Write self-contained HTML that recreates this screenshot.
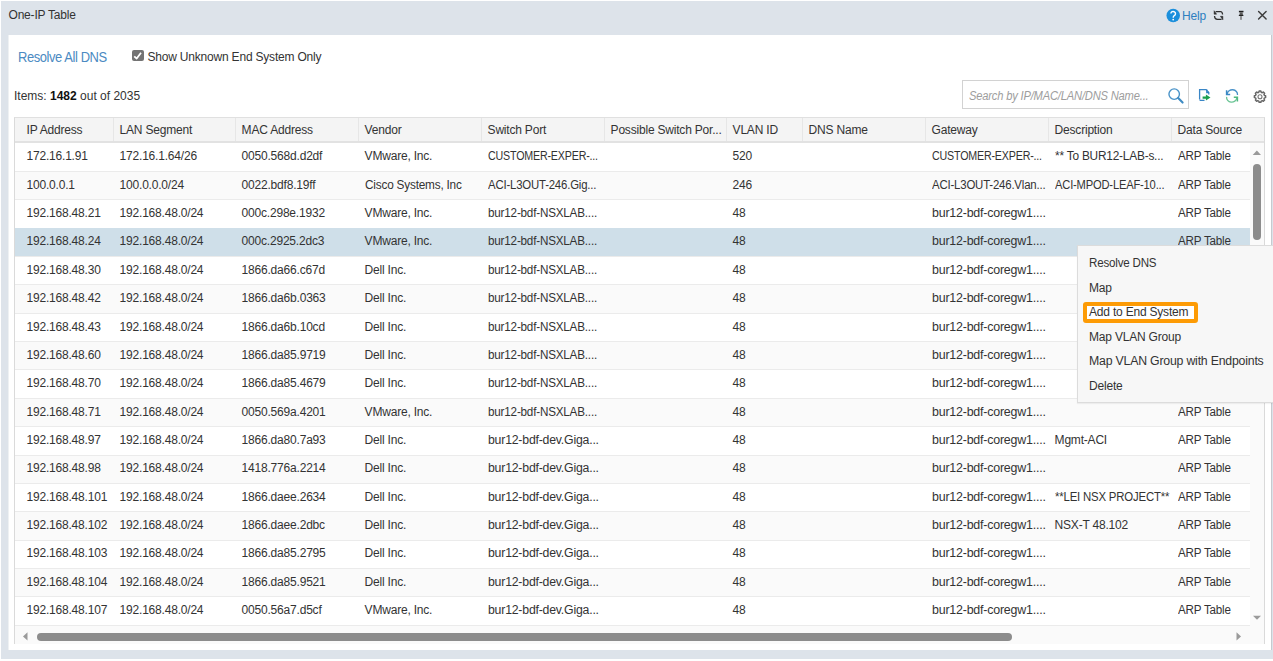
<!DOCTYPE html>
<html><head><meta charset="utf-8"><title>One-IP Table</title>
<style>
*{box-sizing:border-box;margin:0;padding:0}
html,body{width:1273px;height:661px;overflow:hidden;background:#fff}
body{position:relative;font-family:"Liberation Sans",sans-serif;font-size:12px;color:#333;letter-spacing:-0.2px}
.a{position:absolute}
.t{position:absolute;white-space:nowrap;line-height:14px}
svg{position:absolute;overflow:visible}
</style></head><body>

<div class="a" style="left:1px;top:1px;width:1272px;height:658px;background:#dde3ea"></div>
<div class="t" style="left:8.5px;top:8px;color:#333">One-IP Table</div>
<div class="a" style="left:8px;top:35px;width:1264px;height:615px;background:#fff;border-right:1px solid #c6cacf;border-left:1px solid #eef1f3"></div>
<div class="t" style="left:18px;top:50px;font-size:14px;letter-spacing:-0.45px;color:#4b8ac2;transform:scaleX(0.925);transform-origin:0 0">Resolve All DNS</div>
<div class="a" style="left:132.4px;top:50px;width:11.4px;height:11.2px;background:#737373;border-radius:2px"></div>
<svg style="left:132.4px;top:50px" width="11" height="11" viewBox="0 0 11 11"><path d="M2.2 6.3 L4.7 8.5 L9.0 2.7" stroke="#fff" stroke-width="1.75" fill="none" stroke-linejoin="round"/></svg>
<div class="t" style="left:147.5px;top:50px">Show Unknown End System Only</div>
<div class="t" style="left:14px;top:89px;letter-spacing:0">Items: <b style="color:#111">1482</b> out of 2035</div>
<div class="a" style="left:962px;top:80px;width:227px;height:29px;border:1px solid #d2d2d2;background:#fff"></div>
<div class="t" style="left:968.5px;top:89px;font-style:italic;color:#9d9d9d;transform:scaleX(0.93);transform-origin:0 0">Search by IP/MAC/LAN/DNS Name...</div>
<svg style="left:1160px;top:82px" width="30" height="26"><circle cx="14.2" cy="12.1" r="5.25" stroke="#4a93c8" stroke-width="1.4" fill="none"/><path d="M18.2 16.1 L22.6 20.6" stroke="#3f8bc3" stroke-width="2.1" stroke-linecap="round"/></svg>
<svg style="left:1195px;top:85px" width="20" height="20"><path d="M4.6 14.5 L4.6 4.6 L11 4.6 L13.8 7.4 L13.8 9.5 M4.6 15.3 L9.5 15.3" stroke="#3a86c6" stroke-width="1.3" fill="none"/><path d="M11.8 4.6 L11.8 7.5 L14 7.5" stroke="#2f7fc1" stroke-width="1.3" fill="none"/><path d="M7.6 11.4 L10.9 11.4 L10.9 9.4 L15.5 12.5 L10.9 15.6 L10.9 13.7 L7.6 13.7 Z" fill="#1a9f4f"/></svg>
<svg style="left:1224px;top:88px" width="16" height="16"><path d="M3.2 6 A5 4.6 0 0 1 13.5 7" stroke="#4a92c9" stroke-width="1.3" fill="none"/><path d="M2.6 2.2 L2.6 6.6 L6.2 6.6" stroke="#3a88c4" stroke-width="1.5" fill="none"/><path d="M2.6 8.8 A5 4.6 0 0 0 12.8 10" stroke="#6cc596" stroke-width="1.3" fill="none"/><path d="M13.4 13.6 L13.4 9.2 L9.8 9.2" stroke="#4fb87f" stroke-width="1.5" fill="none"/></svg>
<svg style="left:1248px;top:85px" width="24" height="22"><path d="M10.81 7.26 L11.11 6.07 L12.89 6.07 L13.19 7.26 L14.30 7.72 L15.35 7.09 L16.61 8.35 L15.98 9.40 L16.44 10.51 L17.63 10.81 L17.63 12.59 L16.44 12.89 L15.98 14.00 L16.61 15.05 L15.35 16.31 L14.30 15.68 L13.19 16.14 L12.89 17.33 L11.11 17.33 L10.81 16.14 L9.70 15.68 L8.65 16.31 L7.39 15.05 L8.02 14.00 L7.56 12.89 L6.37 12.59 L6.37 10.81 L7.56 10.51 L8.02 9.40 L7.39 8.35 L8.65 7.09 L9.70 7.72 Z" stroke="#666" stroke-width="1.45" fill="none" stroke-linejoin="round"/><circle cx="12" cy="11.7" r="2.0" stroke="#777" stroke-width="1.1" fill="none"/></svg>
<div class="a" style="left:14px;top:117px;width:1251px;height:527px;border:1px solid #dadada;border-top-color:#e0e0e0;border-bottom:0;background:#fafafa"></div>
<div class="a" style="left:15px;top:118px;width:1249px;height:23px;background:#f4f4f4"></div>
<div class="a" style="left:15px;top:141px;width:1249px;height:2px;background:#e2e2e2"></div>
<div class="t" style="left:26.5px;top:123px">IP Address</div>
<div class="a" style="left:113px;top:118px;width:1px;height:23px;background:#e6e6e6"></div>
<div class="t" style="left:119.6px;top:123px">LAN Segment</div>
<div class="a" style="left:235px;top:118px;width:1px;height:23px;background:#e6e6e6"></div>
<div class="t" style="left:241.6px;top:123px">MAC Address</div>
<div class="a" style="left:358px;top:118px;width:1px;height:23px;background:#e6e6e6"></div>
<div class="t" style="left:364.6px;top:123px">Vendor</div>
<div class="a" style="left:481px;top:118px;width:1px;height:23px;background:#e6e6e6"></div>
<div class="t" style="left:487.6px;top:123px">Switch Port</div>
<div class="a" style="left:604px;top:118px;width:1px;height:23px;background:#e6e6e6"></div>
<div class="t" style="left:610.6px;top:123px">Possible Switch Por...</div>
<div class="a" style="left:726px;top:118px;width:1px;height:23px;background:#e6e6e6"></div>
<div class="t" style="left:732.6px;top:123px">VLAN ID</div>
<div class="a" style="left:802px;top:118px;width:1px;height:23px;background:#e6e6e6"></div>
<div class="t" style="left:808.6px;top:123px">DNS Name</div>
<div class="a" style="left:925px;top:118px;width:1px;height:23px;background:#e6e6e6"></div>
<div class="t" style="left:931.6px;top:123px">Gateway</div>
<div class="a" style="left:1048px;top:118px;width:1px;height:23px;background:#e6e6e6"></div>
<div class="t" style="left:1054.6px;top:123px">Description</div>
<div class="a" style="left:1171px;top:118px;width:1px;height:23px;background:#e6e6e6"></div>
<div class="t" style="left:1177.6px;top:123px">Data Source</div>
<div class="a" style="left:15px;top:143px;width:1235px;height:482px;background:#fff"></div>
<div class="a" style="left:15px;top:143px;width:1235px;height:28px;background:#fff"></div>
<div class="a" style="left:15px;top:171px;width:1235px;height:1px;background:#ebebeb"></div>
<div class="t" style="left:26.5px;top:149px">172.16.1.91</div>
<div class="t" style="left:119.6px;top:149px">172.16.1.64/26</div>
<div class="t" style="left:241.6px;top:149px">0050.568d.d2df</div>
<div class="t" style="left:364.6px;top:149px">VMware, Inc.</div>
<div class="t" style="left:487.6px;top:149px;transform:scaleX(0.8897);transform-origin:0 0">CUSTOMER-EXPER-...</div>
<div class="t" style="left:732.6px;top:149px">520</div>
<div class="t" style="left:931.6px;top:149px;transform:scaleX(0.8897);transform-origin:0 0">CUSTOMER-EXPER-...</div>
<div class="t" style="left:1054.6px;top:149px;transform:scaleX(0.9870);transform-origin:0 0">** To BUR12-LAB-s...</div>
<div class="t" style="left:1177.6px;top:149px;transform:scaleX(0.9675);transform-origin:0 0">ARP Table</div>
<div class="a" style="left:15px;top:172px;width:1235px;height:27px;background:#fafafa"></div>
<div class="a" style="left:15px;top:199px;width:1235px;height:1px;background:#ebebeb"></div>
<div class="t" style="left:26.5px;top:178px">100.0.0.1</div>
<div class="t" style="left:119.6px;top:178px">100.0.0.0/24</div>
<div class="t" style="left:241.6px;top:178px">0022.bdf8.19ff</div>
<div class="t" style="left:364.6px;top:178px;transform:scaleX(0.9823);transform-origin:0 0">Cisco Systems, Inc</div>
<div class="t" style="left:487.6px;top:178px;transform:scaleX(0.9487);transform-origin:0 0">ACI-L3OUT-246.Gig...</div>
<div class="t" style="left:732.6px;top:178px">246</div>
<div class="t" style="left:931.6px;top:178px;transform:scaleX(0.9514);transform-origin:0 0">ACI-L3OUT-246.Vlan...</div>
<div class="t" style="left:1054.6px;top:178px;transform:scaleX(0.9306);transform-origin:0 0">ACI-MPOD-LEAF-10...</div>
<div class="t" style="left:1177.6px;top:178px;transform:scaleX(0.9675);transform-origin:0 0">ARP Table</div>
<div class="a" style="left:15px;top:200px;width:1235px;height:28px;background:#fff"></div>
<div class="a" style="left:15px;top:228px;width:1235px;height:1px;background:#ebebeb"></div>
<div class="t" style="left:26.5px;top:206px">192.168.48.21</div>
<div class="t" style="left:119.6px;top:206px">192.168.48.0/24</div>
<div class="t" style="left:241.6px;top:206px">000c.298e.1932</div>
<div class="t" style="left:364.6px;top:206px">VMware, Inc.</div>
<div class="t" style="left:487.6px;top:206px;transform:scaleX(0.9727);transform-origin:0 0">bur12-bdf-NSXLAB....</div>
<div class="t" style="left:732.6px;top:206px">48</div>
<div class="t" style="left:931.6px;top:206px;transform:scaleX(1.0350);transform-origin:0 0">bur12-bdf-coregw1....</div>
<div class="t" style="left:1177.6px;top:206px;transform:scaleX(0.9675);transform-origin:0 0">ARP Table</div>
<div class="a" style="left:15px;top:228px;width:1235px;height:28px;background:#cfdfe9"></div>
<div class="a" style="left:15px;top:256px;width:1235px;height:1px;background:#ebebeb"></div>
<div class="t" style="left:26.5px;top:234px">192.168.48.24</div>
<div class="t" style="left:119.6px;top:234px">192.168.48.0/24</div>
<div class="t" style="left:241.6px;top:234px">000c.2925.2dc3</div>
<div class="t" style="left:364.6px;top:234px">VMware, Inc.</div>
<div class="t" style="left:487.6px;top:234px;transform:scaleX(0.9727);transform-origin:0 0">bur12-bdf-NSXLAB....</div>
<div class="t" style="left:732.6px;top:234px">48</div>
<div class="t" style="left:931.6px;top:234px;transform:scaleX(1.0350);transform-origin:0 0">bur12-bdf-coregw1....</div>
<div class="t" style="left:1177.6px;top:234px;transform:scaleX(0.9675);transform-origin:0 0">ARP Table</div>
<div class="a" style="left:15px;top:257px;width:1235px;height:27px;background:#fff"></div>
<div class="a" style="left:15px;top:284px;width:1235px;height:1px;background:#ebebeb"></div>
<div class="t" style="left:26.5px;top:263px">192.168.48.30</div>
<div class="t" style="left:119.6px;top:263px">192.168.48.0/24</div>
<div class="t" style="left:241.6px;top:263px">1866.da66.c67d</div>
<div class="t" style="left:364.6px;top:263px">Dell Inc.</div>
<div class="t" style="left:487.6px;top:263px;transform:scaleX(0.9727);transform-origin:0 0">bur12-bdf-NSXLAB....</div>
<div class="t" style="left:732.6px;top:263px">48</div>
<div class="t" style="left:931.6px;top:263px;transform:scaleX(1.0350);transform-origin:0 0">bur12-bdf-coregw1....</div>
<div class="t" style="left:1177.6px;top:263px;transform:scaleX(0.9675);transform-origin:0 0">ARP Table</div>
<div class="a" style="left:15px;top:285px;width:1235px;height:28px;background:#fafafa"></div>
<div class="a" style="left:15px;top:313px;width:1235px;height:1px;background:#ebebeb"></div>
<div class="t" style="left:26.5px;top:291px">192.168.48.42</div>
<div class="t" style="left:119.6px;top:291px">192.168.48.0/24</div>
<div class="t" style="left:241.6px;top:291px">1866.da6b.0363</div>
<div class="t" style="left:364.6px;top:291px">Dell Inc.</div>
<div class="t" style="left:487.6px;top:291px;transform:scaleX(0.9727);transform-origin:0 0">bur12-bdf-NSXLAB....</div>
<div class="t" style="left:732.6px;top:291px">48</div>
<div class="t" style="left:931.6px;top:291px;transform:scaleX(1.0350);transform-origin:0 0">bur12-bdf-coregw1....</div>
<div class="t" style="left:1177.6px;top:291px;transform:scaleX(0.9675);transform-origin:0 0">ARP Table</div>
<div class="a" style="left:15px;top:314px;width:1235px;height:27px;background:#fff"></div>
<div class="a" style="left:15px;top:341px;width:1235px;height:1px;background:#ebebeb"></div>
<div class="t" style="left:26.5px;top:320px">192.168.48.43</div>
<div class="t" style="left:119.6px;top:320px">192.168.48.0/24</div>
<div class="t" style="left:241.6px;top:320px">1866.da6b.10cd</div>
<div class="t" style="left:364.6px;top:320px">Dell Inc.</div>
<div class="t" style="left:487.6px;top:320px;transform:scaleX(0.9727);transform-origin:0 0">bur12-bdf-NSXLAB....</div>
<div class="t" style="left:732.6px;top:320px">48</div>
<div class="t" style="left:931.6px;top:320px;transform:scaleX(1.0350);transform-origin:0 0">bur12-bdf-coregw1....</div>
<div class="t" style="left:1177.6px;top:320px;transform:scaleX(0.9675);transform-origin:0 0">ARP Table</div>
<div class="a" style="left:15px;top:342px;width:1235px;height:27px;background:#fafafa"></div>
<div class="a" style="left:15px;top:369px;width:1235px;height:1px;background:#ebebeb"></div>
<div class="t" style="left:26.5px;top:348px">192.168.48.60</div>
<div class="t" style="left:119.6px;top:348px">192.168.48.0/24</div>
<div class="t" style="left:241.6px;top:348px">1866.da85.9719</div>
<div class="t" style="left:364.6px;top:348px">Dell Inc.</div>
<div class="t" style="left:487.6px;top:348px;transform:scaleX(0.9727);transform-origin:0 0">bur12-bdf-NSXLAB....</div>
<div class="t" style="left:732.6px;top:348px">48</div>
<div class="t" style="left:931.6px;top:348px;transform:scaleX(1.0350);transform-origin:0 0">bur12-bdf-coregw1....</div>
<div class="t" style="left:1177.6px;top:348px;transform:scaleX(0.9675);transform-origin:0 0">ARP Table</div>
<div class="a" style="left:15px;top:370px;width:1235px;height:28px;background:#fff"></div>
<div class="a" style="left:15px;top:398px;width:1235px;height:1px;background:#ebebeb"></div>
<div class="t" style="left:26.5px;top:376px">192.168.48.70</div>
<div class="t" style="left:119.6px;top:376px">192.168.48.0/24</div>
<div class="t" style="left:241.6px;top:376px">1866.da85.4679</div>
<div class="t" style="left:364.6px;top:376px">Dell Inc.</div>
<div class="t" style="left:487.6px;top:376px;transform:scaleX(0.9727);transform-origin:0 0">bur12-bdf-NSXLAB....</div>
<div class="t" style="left:732.6px;top:376px">48</div>
<div class="t" style="left:931.6px;top:376px;transform:scaleX(1.0350);transform-origin:0 0">bur12-bdf-coregw1....</div>
<div class="t" style="left:1177.6px;top:376px;transform:scaleX(0.9675);transform-origin:0 0">ARP Table</div>
<div class="a" style="left:15px;top:399px;width:1235px;height:27px;background:#fafafa"></div>
<div class="a" style="left:15px;top:426px;width:1235px;height:1px;background:#ebebeb"></div>
<div class="t" style="left:26.5px;top:405px">192.168.48.71</div>
<div class="t" style="left:119.6px;top:405px">192.168.48.0/24</div>
<div class="t" style="left:241.6px;top:405px">0050.569a.4201</div>
<div class="t" style="left:364.6px;top:405px">VMware, Inc.</div>
<div class="t" style="left:487.6px;top:405px;transform:scaleX(0.9727);transform-origin:0 0">bur12-bdf-NSXLAB....</div>
<div class="t" style="left:732.6px;top:405px">48</div>
<div class="t" style="left:931.6px;top:405px;transform:scaleX(1.0350);transform-origin:0 0">bur12-bdf-coregw1....</div>
<div class="t" style="left:1177.6px;top:405px;transform:scaleX(0.9675);transform-origin:0 0">ARP Table</div>
<div class="a" style="left:15px;top:427px;width:1235px;height:28px;background:#fff"></div>
<div class="a" style="left:15px;top:455px;width:1235px;height:1px;background:#ebebeb"></div>
<div class="t" style="left:26.5px;top:433px">192.168.48.97</div>
<div class="t" style="left:119.6px;top:433px">192.168.48.0/24</div>
<div class="t" style="left:241.6px;top:433px">1866.da80.7a93</div>
<div class="t" style="left:364.6px;top:433px">Dell Inc.</div>
<div class="t" style="left:487.6px;top:433px;transform:scaleX(1.0230);transform-origin:0 0">bur12-bdf-dev.Giga...</div>
<div class="t" style="left:732.6px;top:433px">48</div>
<div class="t" style="left:931.6px;top:433px;transform:scaleX(1.0350);transform-origin:0 0">bur12-bdf-coregw1....</div>
<div class="t" style="left:1054.6px;top:433px">Mgmt-ACI</div>
<div class="t" style="left:1177.6px;top:433px;transform:scaleX(0.9675);transform-origin:0 0">ARP Table</div>
<div class="a" style="left:15px;top:456px;width:1235px;height:27px;background:#fafafa"></div>
<div class="a" style="left:15px;top:483px;width:1235px;height:1px;background:#ebebeb"></div>
<div class="t" style="left:26.5px;top:461px">192.168.48.98</div>
<div class="t" style="left:119.6px;top:461px">192.168.48.0/24</div>
<div class="t" style="left:241.6px;top:461px">1418.776a.2214</div>
<div class="t" style="left:364.6px;top:461px">Dell Inc.</div>
<div class="t" style="left:487.6px;top:461px;transform:scaleX(1.0230);transform-origin:0 0">bur12-bdf-dev.Giga...</div>
<div class="t" style="left:732.6px;top:461px">48</div>
<div class="t" style="left:931.6px;top:461px;transform:scaleX(1.0350);transform-origin:0 0">bur12-bdf-coregw1....</div>
<div class="t" style="left:1177.6px;top:461px;transform:scaleX(0.9675);transform-origin:0 0">ARP Table</div>
<div class="a" style="left:15px;top:484px;width:1235px;height:27px;background:#fff"></div>
<div class="a" style="left:15px;top:511px;width:1235px;height:1px;background:#ebebeb"></div>
<div class="t" style="left:26.5px;top:490px">192.168.48.101</div>
<div class="t" style="left:119.6px;top:490px">192.168.48.0/24</div>
<div class="t" style="left:241.6px;top:490px">1866.daee.2634</div>
<div class="t" style="left:364.6px;top:490px">Dell Inc.</div>
<div class="t" style="left:487.6px;top:490px;transform:scaleX(1.0230);transform-origin:0 0">bur12-bdf-dev.Giga...</div>
<div class="t" style="left:732.6px;top:490px">48</div>
<div class="t" style="left:931.6px;top:490px;transform:scaleX(1.0350);transform-origin:0 0">bur12-bdf-coregw1....</div>
<div class="t" style="left:1054.6px;top:490px;transform:scaleX(0.9497);transform-origin:0 0">**LEI NSX PROJECT**</div>
<div class="t" style="left:1177.6px;top:490px;transform:scaleX(0.9675);transform-origin:0 0">ARP Table</div>
<div class="a" style="left:15px;top:512px;width:1235px;height:28px;background:#fafafa"></div>
<div class="a" style="left:15px;top:540px;width:1235px;height:1px;background:#ebebeb"></div>
<div class="t" style="left:26.5px;top:518px">192.168.48.102</div>
<div class="t" style="left:119.6px;top:518px">192.168.48.0/24</div>
<div class="t" style="left:241.6px;top:518px">1866.daee.2dbc</div>
<div class="t" style="left:364.6px;top:518px">Dell Inc.</div>
<div class="t" style="left:487.6px;top:518px;transform:scaleX(1.0230);transform-origin:0 0">bur12-bdf-dev.Giga...</div>
<div class="t" style="left:732.6px;top:518px">48</div>
<div class="t" style="left:931.6px;top:518px;transform:scaleX(1.0350);transform-origin:0 0">bur12-bdf-coregw1....</div>
<div class="t" style="left:1054.6px;top:518px">NSX-T 48.102</div>
<div class="t" style="left:1177.6px;top:518px;transform:scaleX(0.9675);transform-origin:0 0">ARP Table</div>
<div class="a" style="left:15px;top:541px;width:1235px;height:27px;background:#fff"></div>
<div class="a" style="left:15px;top:568px;width:1235px;height:1px;background:#ebebeb"></div>
<div class="t" style="left:26.5px;top:546px">192.168.48.103</div>
<div class="t" style="left:119.6px;top:546px">192.168.48.0/24</div>
<div class="t" style="left:241.6px;top:546px">1866.da85.2795</div>
<div class="t" style="left:364.6px;top:546px">Dell Inc.</div>
<div class="t" style="left:487.6px;top:546px;transform:scaleX(1.0230);transform-origin:0 0">bur12-bdf-dev.Giga...</div>
<div class="t" style="left:732.6px;top:546px">48</div>
<div class="t" style="left:931.6px;top:546px;transform:scaleX(1.0350);transform-origin:0 0">bur12-bdf-coregw1....</div>
<div class="t" style="left:1177.6px;top:546px;transform:scaleX(0.9675);transform-origin:0 0">ARP Table</div>
<div class="a" style="left:15px;top:569px;width:1235px;height:27px;background:#fafafa"></div>
<div class="a" style="left:15px;top:596px;width:1235px;height:1px;background:#ebebeb"></div>
<div class="t" style="left:26.5px;top:575px">192.168.48.104</div>
<div class="t" style="left:119.6px;top:575px">192.168.48.0/24</div>
<div class="t" style="left:241.6px;top:575px">1866.da85.9521</div>
<div class="t" style="left:364.6px;top:575px">Dell Inc.</div>
<div class="t" style="left:487.6px;top:575px;transform:scaleX(1.0230);transform-origin:0 0">bur12-bdf-dev.Giga...</div>
<div class="t" style="left:732.6px;top:575px">48</div>
<div class="t" style="left:931.6px;top:575px;transform:scaleX(1.0350);transform-origin:0 0">bur12-bdf-coregw1....</div>
<div class="t" style="left:1177.6px;top:575px;transform:scaleX(0.9675);transform-origin:0 0">ARP Table</div>
<div class="a" style="left:15px;top:597px;width:1235px;height:28px;background:#fff"></div>
<div class="a" style="left:15px;top:625px;width:1235px;height:1px;background:#ebebeb"></div>
<div class="t" style="left:26.5px;top:603px">192.168.48.107</div>
<div class="t" style="left:119.6px;top:603px">192.168.48.0/24</div>
<div class="t" style="left:241.6px;top:603px">0050.56a7.d5cf</div>
<div class="t" style="left:364.6px;top:603px">VMware, Inc.</div>
<div class="t" style="left:487.6px;top:603px;transform:scaleX(1.0230);transform-origin:0 0">bur12-bdf-dev.Giga...</div>
<div class="t" style="left:732.6px;top:603px">48</div>
<div class="t" style="left:931.6px;top:603px;transform:scaleX(1.0350);transform-origin:0 0">bur12-bdf-coregw1....</div>
<div class="t" style="left:1177.6px;top:603px;transform:scaleX(0.9675);transform-origin:0 0">ARP Table</div>
<svg style="left:1252px;top:150px" width="10" height="6"><path d="M0.7 4.9 L4.85 0.6 L9 4.9 Z" fill="#999"/></svg>
<div class="a" style="left:1253px;top:163.5px;width:8px;height:76px;background:#8c8c8c;border-radius:4px"></div>
<svg style="left:1252px;top:615px" width="10" height="6"><path d="M1 0.8 L5 4.8 L9 0.8 Z" fill="#9a9a9a"/></svg>
<svg style="left:22px;top:632px" width="6" height="9"><path d="M5.5 0.3 L1 4.4 L5.5 8.5 Z" fill="#9a9a9a"/></svg>
<div class="a" style="left:36.5px;top:632.5px;width:975.5px;height:8.2px;background:#8c8c8c;border-radius:4px"></div>
<svg style="left:1236px;top:632px" width="6" height="9"><path d="M0.5 0.3 L5 4.4 L0.5 8.5 Z" fill="#9a9a9a"/></svg>
<div class="a" style="left:1077px;top:245px;width:200px;height:158px;background:#f7f7f7;border:1px solid #dcdcdc;box-shadow:0 1px 1px rgba(0,0,0,0.05)"></div>
<div class="a" style="left:1083px;top:302px;width:115px;height:21px;border:4px solid #fd9b05;border-radius:3px;background:#fff"></div>
<div class="t" style="left:1089px;top:256.0px;transform:scaleX(0.965);transform-origin:0 0">Resolve DNS</div>
<div class="t" style="left:1089px;top:280.5px">Map</div>
<div class="t" style="left:1089px;top:305.0px">Add to End System</div>
<div class="t" style="left:1089px;top:329.5px">Map VLAN Group</div>
<div class="t" style="left:1089px;top:354.0px;transform:scaleX(1.025);transform-origin:0 0">Map VLAN Group with Endpoints</div>
<div class="t" style="left:1089px;top:378.5px">Delete</div>
<svg style="left:1160px;top:5px" width="24" height="24"><circle cx="13.2" cy="10.5" r="6.75" fill="#1b8fdc"/><path d="M10.9 8.6 A2.3 2.2 0 1 1 14.3 10.6 C13.4 11.1 13.2 11.5 13.2 12.7" stroke="#fff" stroke-width="1.4" fill="none"/><circle cx="13.2" cy="14.6" r="0.9" fill="#fff"/></svg>
<div class="t" style="left:1182px;top:9px;color:#2d7fc0">Help</div>
<svg style="left:1211px;top:8px" width="16" height="14"><path d="M4.6 3.5 L9.4 3.5 Q11.5 3.6 11.6 6.6" stroke="#303030" stroke-width="1.25" fill="none"/><path d="M3.1 2.7 L3.1 6.2 L5.6 6.2 Z" fill="#2a2a2a" stroke="#2a2a2a" stroke-width="0.5"/><path d="M3.5 8.0 Q3.7 11.3 6.4 11.4 L10.6 11.4" stroke="#303030" stroke-width="1.25" fill="none"/><path d="M11.9 11.9 L11.9 8.3 L9.4 8.3 Z" fill="#2a2a2a" stroke="#2a2a2a" stroke-width="0.5"/></svg>
<svg style="left:1236px;top:8px" width="10" height="14"><rect x="2.9" y="2.8" width="4.6" height="1.5" fill="#1e1e1e"/><rect x="3.7" y="4.3" width="3" height="2.4" fill="#5a5a5a"/><path d="M3.4 6.5 L7 6.5 L7.6 8.1 L2.6 8.1 Z" fill="#222"/><rect x="4.35" y="8.1" width="1.3" height="3.7" fill="#666"/></svg>
<svg style="left:1250px;top:5px" width="23" height="20"><path d="M8.6 6.6 L16.1 14.1 M16.1 6.6 L8.6 14.1" stroke="#3c3c3c" stroke-width="1.45" stroke-linecap="round"/></svg>
</body></html>
